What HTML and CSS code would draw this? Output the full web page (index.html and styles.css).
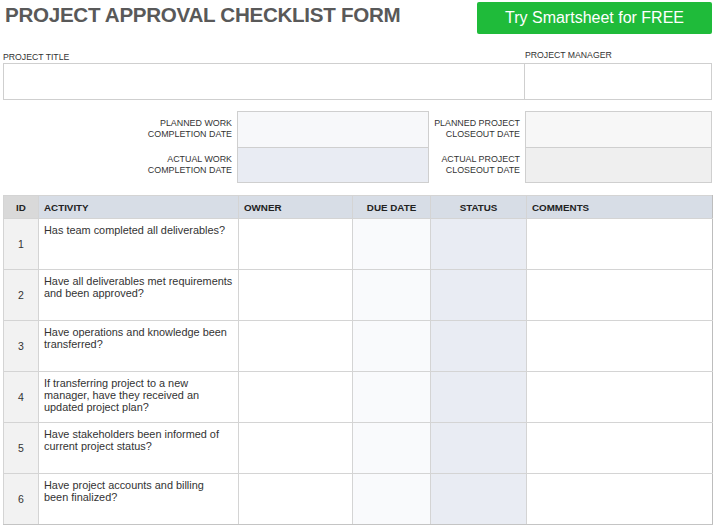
FILE: index.html
```html
<!DOCTYPE html>
<html>
<head>
<meta charset="utf-8">
<link rel="stylesheet" href="styles.css">
</head>
<body>
<div class="page">
  <header class="top">
    <h1 class="title">PROJECT APPROVAL CHECKLIST FORM</h1>
    <a class="cta">Try Smartsheet for FREE</a>
  </header>

  <section class="project">
    <div class="field">
      <div class="label title-label">PROJECT TITLE</div>
      <div class="box"></div>
    </div>
    <div class="field">
      <div class="label">PROJECT MANAGER</div>
      <div class="box box-right"></div>
    </div>
  </section>

  <section class="dates">
    <div class="dlabel">PLANNED WORK<br>COMPLETION DATE</div>
    <div class="dbox work-planned"></div>
    <div class="dlabel">PLANNED PROJECT<br>CLOSEOUT DATE</div>
    <div class="dbox close-planned"></div>
    <div class="dlabel">ACTUAL WORK<br>COMPLETION DATE</div>
    <div class="dbox work-actual"></div>
    <div class="dlabel">ACTUAL PROJECT<br>CLOSEOUT DATE</div>
    <div class="dbox close-actual"></div>
  </section>

  <table class="checklist">
    <colgroup>
      <col class="c-id"><col class="c-act"><col class="c-own"><col class="c-due"><col class="c-stat"><col class="c-com">
    </colgroup>
    <thead>
      <tr>
        <th class="id">ID</th>
        <th class="left">ACTIVITY</th>
        <th class="left">OWNER</th>
        <th>DUE DATE</th>
        <th>STATUS</th>
        <th class="left">COMMENTS</th>
      </tr>
    </thead>
    <tbody>
      <tr><td class="id">1</td><td class="act">Has team completed all deliverables?</td><td></td><td class="due"></td><td class="stat"></td><td></td></tr>
      <tr><td class="id">2</td><td class="act">Have all deliverables met requirements<br>and been approved?</td><td></td><td class="due"></td><td class="stat"></td><td></td></tr>
      <tr><td class="id">3</td><td class="act">Have operations and knowledge been<br>transferred?</td><td></td><td class="due"></td><td class="stat"></td><td></td></tr>
      <tr><td class="id">4</td><td class="act">If transferring project to a new<br>manager, have they received an<br>updated project plan?</td><td></td><td class="due"></td><td class="stat"></td><td></td></tr>
      <tr><td class="id">5</td><td class="act">Have stakeholders been informed of<br>current project status?</td><td></td><td class="due"></td><td class="stat"></td><td></td></tr>
      <tr><td class="id">6</td><td class="act">Have project accounts and billing<br>been finalized?</td><td></td><td class="due"></td><td class="stat"></td><td></td></tr>
    </tbody>
  </table>
</div>
</body>
</html>
```

FILE: styles.css
```css
* { box-sizing: border-box; }
html, body { margin: 0; padding: 0; background: #fff; }
body {
  font-family: "Liberation Sans", Arial, sans-serif;
  color: #333;
}
.page {
  width: 716px;
  padding: 0 4px 0 3px;
}
.top {
  display: flex;
  justify-content: space-between;
  align-items: flex-start;
  height: 46px;
}
.title {
  margin: 3px 0 0 2px;
  font-size: 20.6px;
  line-height: 24px;
  font-weight: bold;
  letter-spacing: -0.3px;
  color: #595959;
}
.cta {
  margin-top: 2px;
  width: 235px;
  height: 32px;
  background: #1fbb3a;
  color: #fff;
  border-radius: 2px;
  font-size: 16px;
  line-height: 32px;
  text-align: center;
  text-decoration: none;
}
.project {
  display: grid;
  grid-template-columns: 522px 187px;
}
.field {
  display: flex;
  flex-direction: column;
}
.label {
  font-size: 8.7px;
  line-height: 10px;
  height: 17px;
  padding-top: 4px;
  color: #333;
}
.title-label { padding-top: 6px; }
.box {
  height: 37px;
  border: 1px solid #cfcfcf;
}
.box-right { border-left: none; }

.dates {
  margin-top: 11px;
  display: grid;
  grid-template-columns: 234px 192px 96px 187px;
  grid-template-rows: 36px 36px;
}
.dlabel {
  font-size: 8.9px;
  line-height: 11.5px;
  text-align: right;
  padding-right: 5px;
  display: flex;
  align-items: center;
  justify-content: flex-end;
  color: #333;
}
.dbox { border: 1px solid #cfcfcf; }
.work-planned { background: #f7f8fa; border-bottom: none; }
.work-actual { background: #e9ecf3; }
.close-planned { background: #f7f7f7; border-bottom: none; }
.close-actual { background: #efefef; }

.checklist {
  margin-top: 12px;
  width: 709px;
  border-collapse: collapse;
  table-layout: fixed;
}
.c-id { width: 35px; }
.c-act { width: 200px; }
.c-own { width: 114px; }
.c-due { width: 78px; }
.c-stat { width: 96px; }
.c-com { width: 186px; }
.checklist th, .checklist td {
  border: 1px solid #d4d4d4;
  padding: 0;
}
.checklist th {
  height: 23px;
  background: #d7dde6;
  font-size: 9.8px;
  font-weight: bold;
  color: #222;
  text-align: center;
}
.checklist th.left { text-align: left; padding-left: 5px; }
.checklist th.id { background: #d9d9d9; }
.checklist td {
  height: 51px;
  vertical-align: top;
}
.checklist td.id {
  background: #f2f2f2;
  text-align: center;
  vertical-align: middle;
  font-size: 10.5px;
  color: #333;
}
.checklist td.act {
  font-size: 10.9px;
  line-height: 12px;
  padding: 5px 0 0 5px;
  white-space: nowrap;
  color: #333;
}
.checklist td.due { background: #f9fafc; }
.checklist td.stat { background: #e9ecf3; }
.checklist tr > *:last-child { border-right-color: #bdbdbd; }
.checklist tbody tr:last-child td { border-bottom-color: #c4c4c4; }
```
